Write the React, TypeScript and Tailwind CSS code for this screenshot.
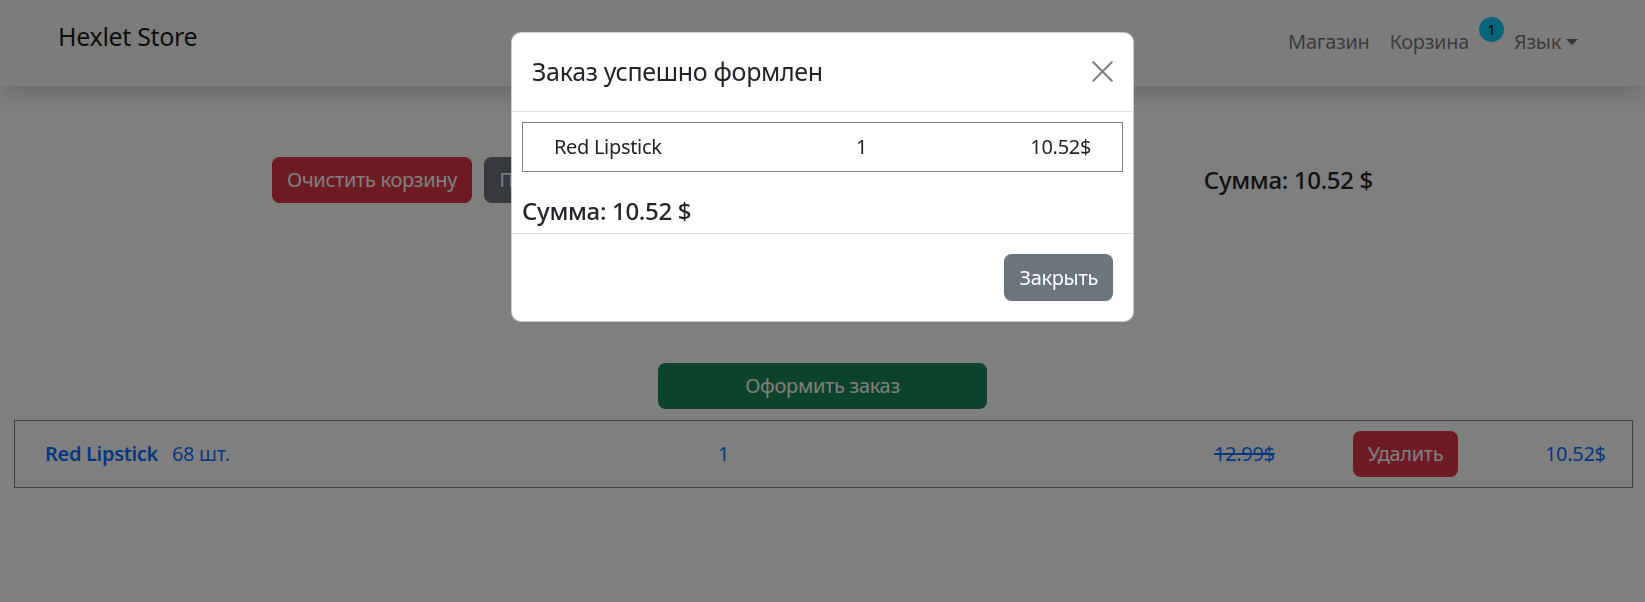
import React from "react";

const font = { fontFamily: '"Noto Sans", "Open Sans", Arial, sans-serif' };

function Navbar() {
  return (
    <nav className="relative z-10 flex h-[86px] items-start bg-[#f8f9fa] pl-[58px] pr-[57px] shadow-[0_10px_20px_rgba(0,0,0,0.15)]">
      <a className="pt-[18px] text-[25px] leading-[1.5] text-black/90">Hexlet Store</a>
      <div className="ml-auto flex items-start pt-[27px] text-[20px] leading-[30px] text-black/55">
        <a className="px-[10px]">Магазин</a>
        <a className="px-[10px]">Корзина</a>
        <span className="-mt-[10px] flex h-[25px] w-[25px] items-center justify-center rounded-full bg-[#0dcaf0] text-[15px] leading-none tracking-normal text-black">
          1
        </span>
        <a className="flex items-center px-[10px]">
          Язык
          <span className="ml-[5px] h-0 w-0 border-x-[6px] border-t-[6px] border-x-transparent border-t-black/55" />
        </a>
      </div>
    </nav>
  );
}

function Cart() {
  return (
    <div className="text-[20px] leading-[1.5] text-[#212529]">
      <div className="flex items-center justify-between px-[272px] pt-[71px]">
        <div className="flex gap-[12px]">
          <button className="h-[46px] rounded-[7.5px] bg-[#dc3545] px-[15px] text-white">Очистить корзину</button>
          <button className="h-[46px] rounded-[7.5px] bg-[#6c757d] px-[15px] text-white">Продолжить покупки</button>
        </div>
        <div className="text-[24px] font-medium leading-[1.2]">Сумма: 10.52 $</div>
      </div>
      <div className="mt-[160px] flex justify-center">
        <button className="h-[46px] w-[329px] rounded-[7.5px] bg-[#198754] text-white">Оформить заказ</button>
      </div>
      <div className="ml-[14px] mr-[12px] mt-[11px] flex items-center border border-[#808080] py-[10px] pl-[30px] text-[#0d6efd]">
        <div className="flex w-[673px] gap-[14px]">
          <a className="font-semibold">Red Lipstick</a>
          <span>68 шт.</span>
        </div>
        <div className="w-[496px]">1</div>
        <div className="w-[139px] line-through">12.99$</div>
        <div className="w-[192px]">
          <button className="h-[46px] w-[105px] rounded-[7.5px] bg-[#dc3545] text-white">Удалить</button>
        </div>
        <div>10.52$</div>
      </div>
    </div>
  );
}

function OrderModal() {
  return (
    <div className="fixed inset-0 z-50 bg-black/50">
      <div className="mx-auto mt-[32px] w-[623px] overflow-hidden rounded-[10px] border border-black/20 bg-white text-[#212529]">
        <div className="flex items-center justify-between border-b border-[#dee2e6] p-[20px]">
          <h5 className="text-[25px] leading-[1.5]">Заказ успешно формлен</h5>
          <button aria-label="Close" className="flex h-[22px] w-[22px] items-center justify-center opacity-50">
            <svg viewBox="0 0 16 16" width="21" height="21" fill="none" stroke="#000" strokeWidth="1.6" strokeLinecap="round">
              <path d="M1 1l14 14M15 1L1 15" />
            </svg>
          </button>
        </div>
        <div className="px-[10px] pt-[10px]">
          <div className="flex items-center border border-[#808080] py-[9px] pl-[31px] text-[20px] leading-[30px]">
            <div className="w-[302px]">Red Lipstick</div>
            <div>1</div>
            <div className="ml-auto pr-[31px]">10.52$</div>
          </div>
          <div className="mb-[8px] mt-[25px] text-[24px] font-medium leading-[1.2]">Сумма: 10.52 $</div>
        </div>
        <div className="flex justify-end border-t border-[#dee2e6] p-[15px]">
          <button className="m-[5px] h-[47px] rounded-[7.5px] bg-[#6c757d] px-[15px] text-[20px] text-white">Закрыть</button>
        </div>
      </div>
    </div>
  );
}

export default function App() {
  return (
    <div className="min-h-screen bg-white tracking-[-0.02em]" style={font}>
      <Navbar />
      <Cart />
      <OrderModal />
    </div>
  );
}
